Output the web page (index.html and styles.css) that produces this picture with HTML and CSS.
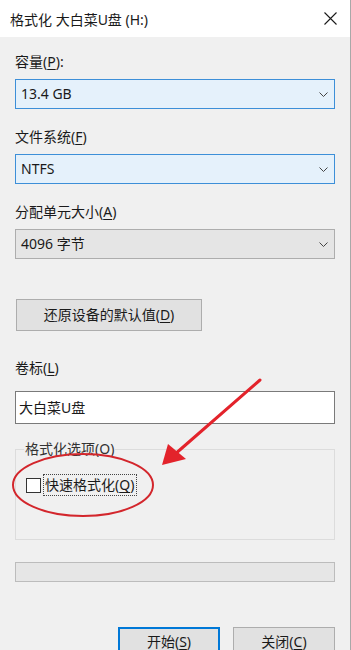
FILE: index.html
```html
<!DOCTYPE html>
<html lang="zh-CN">
<head>
<meta charset="utf-8">
<title>格式化 大白菜U盘 (H:)</title>
<link rel="stylesheet" href="styles.css">
</head>
<body>
<div class="window">
  <div class="titlebar">
    <span class="title">格式化 大白菜U盘 (H:)</span>
    <svg class="close" width="13" height="13" viewBox="0 0 13 13"><path d="M0.5 0.5 L12.5 12.5 M12.5 0.5 L0.5 12.5" stroke="#1a1a1a" stroke-width="1.1" fill="none"/></svg>
  </div>
  <div class="content">
    <div class="label first">容量(<u>P</u>):</div>
    <div class="combo active"><span>13.4 GB</span><svg class="chev" width="9" height="5" viewBox="0 0 9 5"><path d="M0.5 0.5 L4.5 4.5 L8.5 0.5" stroke="#444" stroke-width="1" fill="none"/></svg></div>
    <div class="label">文件系统(<u>F</u>)</div>
    <div class="combo active"><span>NTFS</span><svg class="chev" width="9" height="5" viewBox="0 0 9 5"><path d="M0.5 0.5 L4.5 4.5 L8.5 0.5" stroke="#444" stroke-width="1" fill="none"/></svg></div>
    <div class="label">分配单元大小(<u>A</u>)</div>
    <div class="combo"><span>4096 字节</span><svg class="chev" width="9" height="5" viewBox="0 0 9 5"><path d="M0.5 0.5 L4.5 4.5 L8.5 0.5" stroke="#444" stroke-width="1" fill="none"/></svg></div>
    <div class="restore">还原设备的默认值(<u>D</u>)</div>
    <div class="label vol">卷标(<u>L</u>)</div>
    <div class="textbox">大白菜U盘</div>
    <fieldset class="group">
      <legend>格式化选项(O)</legend>
      <div class="checkrow"><span class="checkbox"></span><span class="checklabel">快速格式化(<u>Q</u>)</span></div>
    </fieldset>
    <div class="progress"></div>
    <div class="buttons">
      <div class="btn default">开始(<u>S</u>)</div>
      <div class="btn">关闭(<u>C</u>)</div>
    </div>
  </div>
  <svg class="annot" width="351" height="650" viewBox="0 0 351 650">
    <ellipse cx="83" cy="485" rx="70" ry="31" fill="none" stroke="#d3262c" stroke-width="2"/>
    <line x1="260" y1="380" x2="174" y2="455" stroke="#e3232b" stroke-width="3" stroke-linecap="round"/>
    <polygon points="162,465 168,444 186,459" fill="#e3232b"/>
  </svg>
</div>
</body>
</html>
```

FILE: styles.css
```css
html, body {
  margin: 0;
  padding: 0;
}
body {
  width: 351px;
  height: 650px;
  overflow: hidden;
  background: #f0f0f0;
  font-family: "Noto Sans", "Noto Sans CJK SC", sans-serif;
  font-size: 14px;
  color: #1a1a1a;
}
u {
  text-decoration: underline;
  text-underline-offset: 2px;
}
.window {
  position: relative;
  width: 351px;
  height: 650px;
  box-sizing: border-box;
  border-right: 1px solid #a8a8a8;
}
.titlebar {
  height: 37px;
  background: #ffffff;
  display: flex;
  align-items: center;
  justify-content: space-between;
  padding: 0 13px 0 10px;
  box-sizing: border-box;
}
.title {
  line-height: 18px;
  margin-top: 2px;
}
.close {
  display: block;
  margin-top: -1px;
}
.content {
  padding: 0 15px 0 15px;
}
.label {
  line-height: 16px;
  height: 16px;
  margin-top: 20px;
}
.label.first {
  margin-top: 17px;
}
.label.vol {
  margin-top: 29px;
}
.combo {
  margin-top: 9px;
  height: 30px;
  box-sizing: border-box;
  border: 1px solid #adadad;
  background: #e5e5e5;
  display: flex;
  align-items: center;
  justify-content: space-between;
  padding: 0 6px 0 5px;
  line-height: 18px;
}
.combo.active {
  border-color: #3d8fd8;
  background: #e5f1fb;
}
.chev {
  display: block;
}
.restore {
  margin-top: 40px;
  margin-left: 1px;
  width: 186px;
  height: 32px;
  box-sizing: border-box;
  border: 1px solid #adadad;
  background: #e1e1e1;
  display: flex;
  align-items: center;
  justify-content: center;
  line-height: 18px;
}
.textbox {
  margin-top: 15px;
  height: 33px;
  box-sizing: border-box;
  border: 1px solid #7a7a7a;
  background: #ffffff;
  display: flex;
  align-items: center;
  padding-left: 3px;
  line-height: 18px;
}
.group {
  margin: 16px 0 0 0;
  padding: 0 0 43px 8px;
  border: 1px solid #dcdcdc;
  min-width: 0;
}
.group legend {
  padding: 0 1px;
  line-height: 18px;
  color: #333;
}
.checkrow {
  margin-top: 16px;
  margin-left: 2px;
  display: flex;
  align-items: center;
  height: 22px;
}
.checkbox {
  width: 13px;
  height: 13px;
  border: 1px solid #333;
  background: #fff;
  flex: none;
}
.checklabel {
  margin-left: 2px;
  border: 1px dotted #444;
  padding: 0 2px 0 1px;
  line-height: 20px;
}
.progress {
  margin-top: 22px;
  height: 20px;
  box-sizing: border-box;
  border: 1px solid #bcbcbc;
  background: #e6e6e6;
}
.buttons {
  margin-top: 45px;
  display: flex;
  justify-content: flex-end;
  gap: 13px;
}
.btn {
  width: 102px;
  height: 30px;
  box-sizing: border-box;
  border: 1px solid #adadad;
  background: #e1e1e1;
  display: flex;
  align-items: center;
  justify-content: center;
  line-height: 18px;
}
.btn.default {
  border: 2px solid #0078d7;
}
.annot {
  position: absolute;
  left: 0;
  top: 0;
  pointer-events: none;
}
```
